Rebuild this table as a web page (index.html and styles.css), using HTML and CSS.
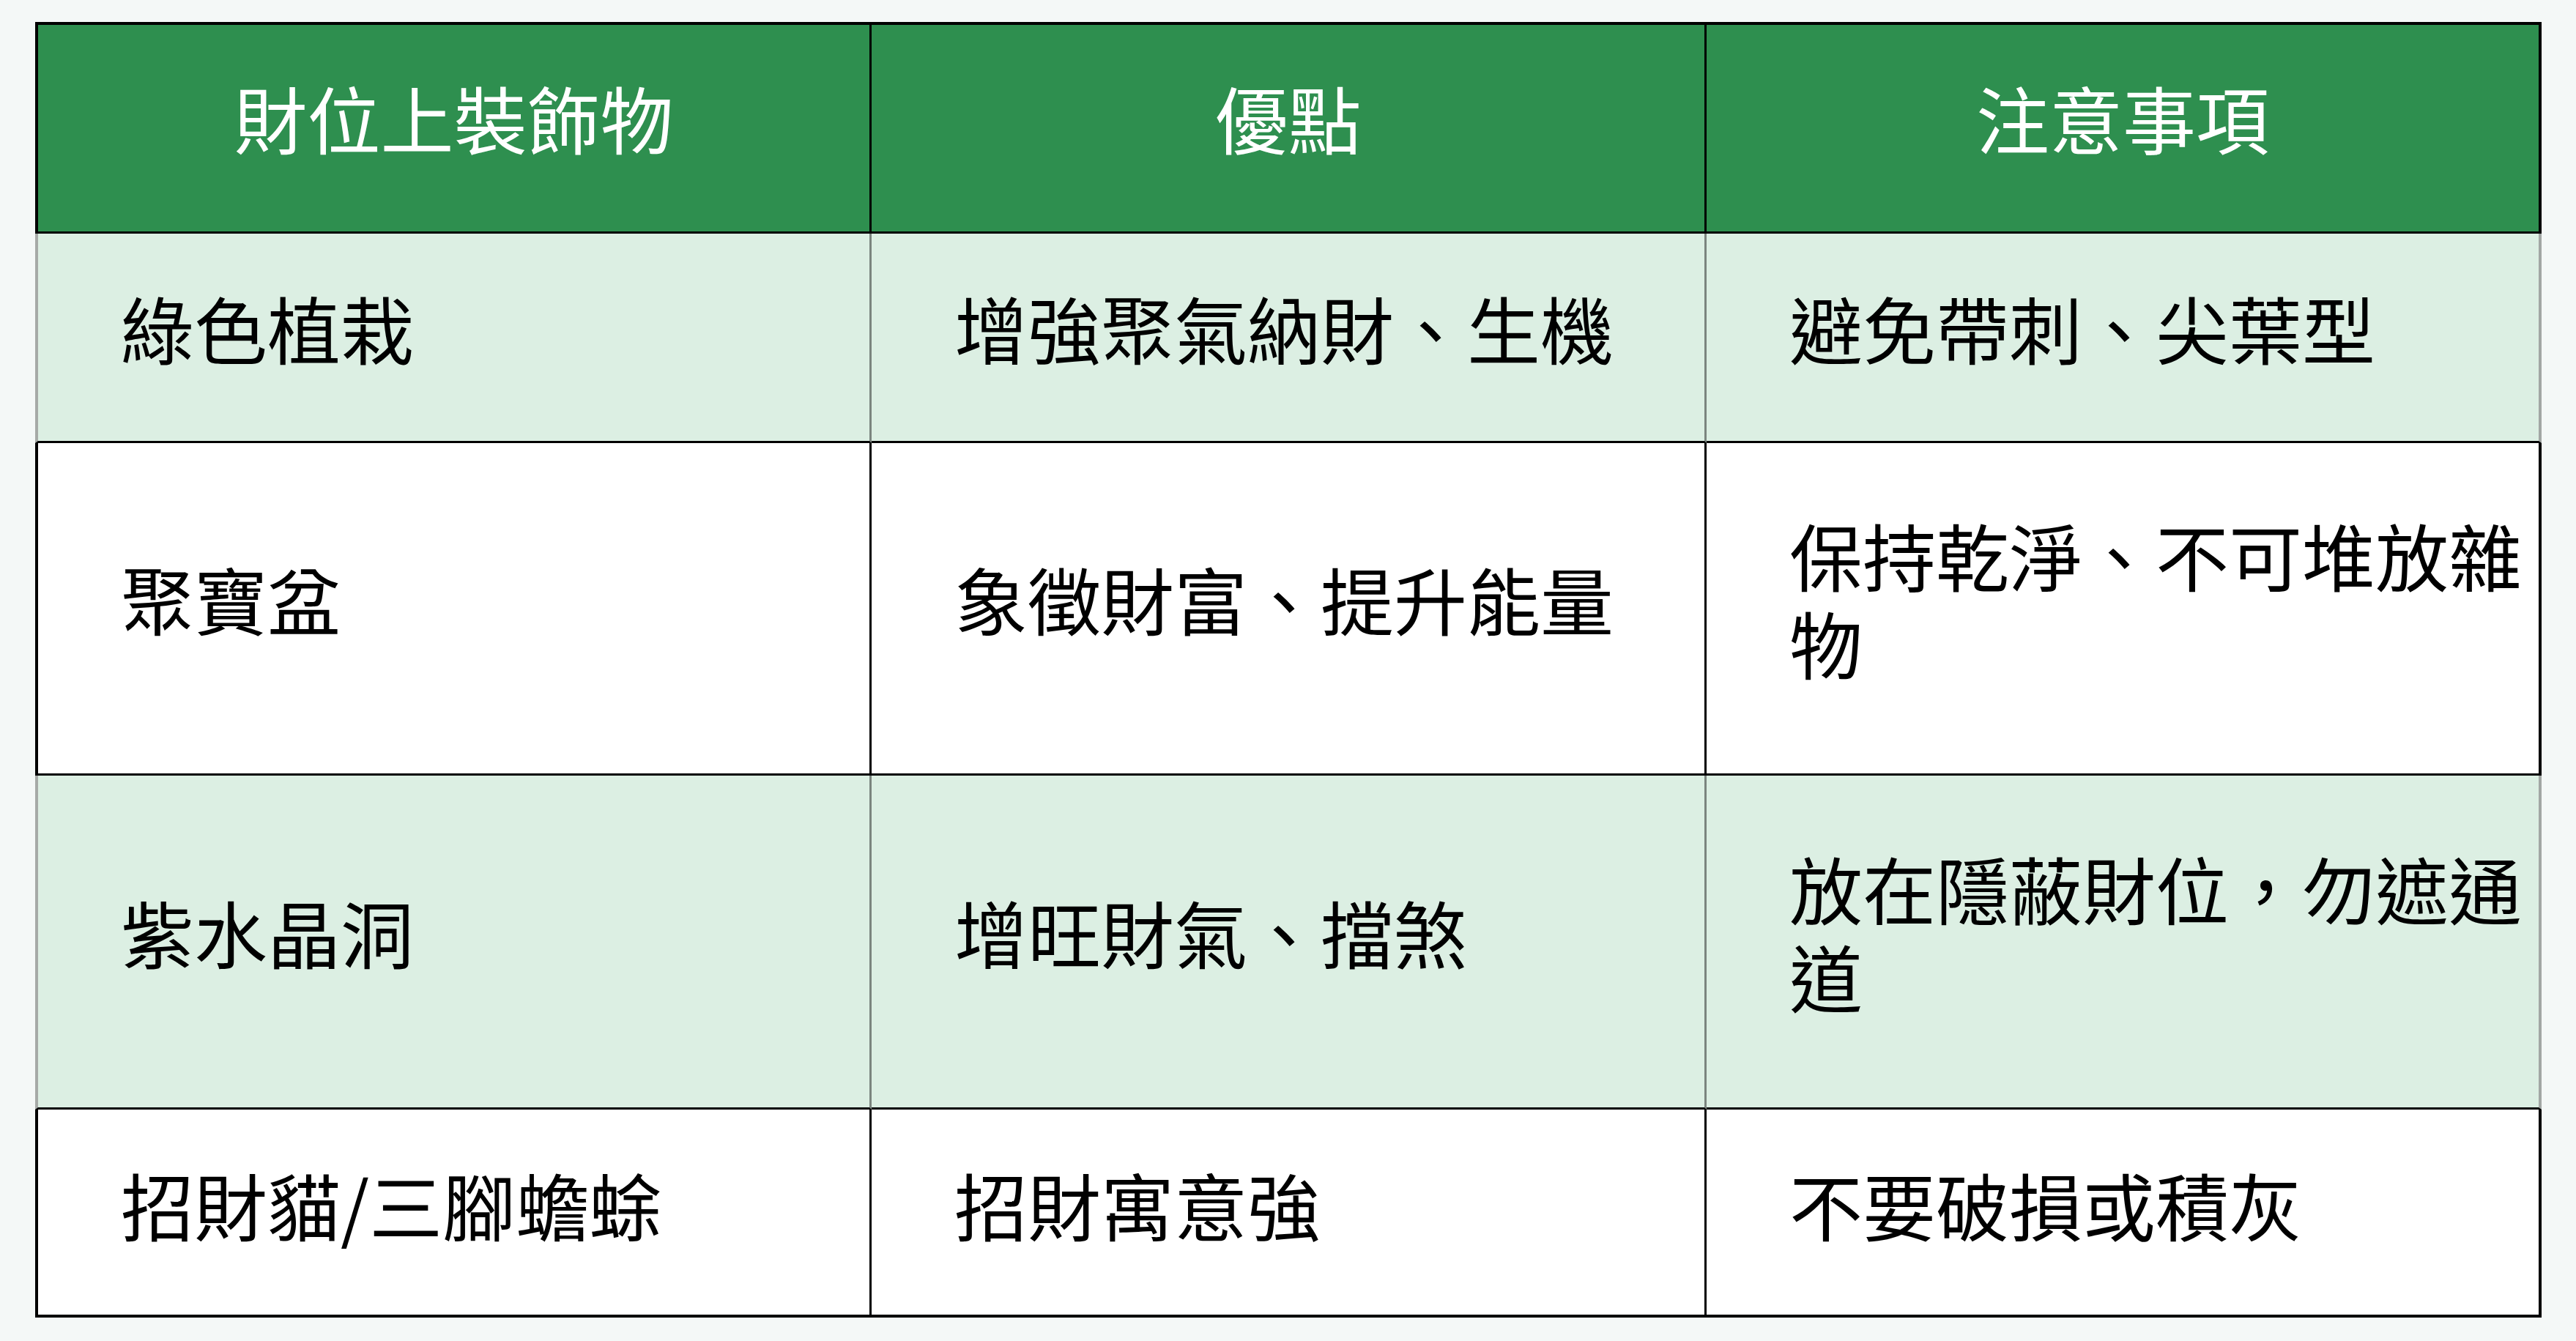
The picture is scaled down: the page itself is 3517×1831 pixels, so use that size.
FILE: index.html
```html
<!DOCTYPE html>
<html lang="zh-Hant">
<head>
<meta charset="utf-8">
<title>財位上裝飾物</title>
<link rel="stylesheet" href="styles.css">
</head>
<body>
<div class="table">
  <div class="cell head first">財位上裝飾物</div>
  <div class="cell head mid">優點</div>
  <div class="cell head last">注意事項</div>

  <div class="cell tint first">綠色植栽</div>
  <div class="cell tint mid">增強聚氣納財、生機</div>
  <div class="cell tint last">避免帶刺、尖葉型</div>

  <div class="cell plain first">聚寶盆</div>
  <div class="cell plain mid">象徵財富、提升能量</div>
  <div class="cell plain last">保持乾淨、不可堆放雜物</div>

  <div class="cell tint first">紫水晶洞</div>
  <div class="cell tint mid">增旺財氣、擋煞</div>
  <div class="cell tint last">放在隱蔽財位，勿遮通道</div>

  <div class="cell plain first end">招財貓/三腳蟾蜍</div>
  <div class="cell plain mid end">招財寓意強</div>
  <div class="cell plain last end">不要破損或積灰</div>
</div>
</body>
</html>
```

FILE: styles.css
```css
html, body {
  margin: 0;
  padding: 0;
  background: #f4f8f7;
}

body {
  padding: 30px 0 0 48px;
  font-family: "Noto Sans CJK TC", "Noto Sans CJK SC", "Noto Sans", sans-serif;
}

.table {
  box-sizing: border-box;
  width: 3422px;
  display: grid;
  grid-template-columns: 1142px 1140px 1140px;
  grid-template-rows: 285px 286px 454px 456px 280px;
  border-top: 4px solid #000;
  border-bottom: 4px solid #000;
}

.cell {
  box-sizing: border-box;
  display: flex;
  align-items: center;
  padding: 0 14px 28px 113px;
  font-size: 100px;
  line-height: 120px;
  color: #000;
  border-bottom: 3px solid #000;
}

.cell.end {
  border-bottom: none;
  padding-bottom: 22px;
}

.cell.first {
  border-left: 4px solid #000;
  border-right: 3px solid #000;
}

.cell.mid {
  border-right: 3px solid #000;
}

.cell.last {
  border-right: 4px solid #000;
}

.head {
  background: #2e8f4f;
  color: #fff;
  justify-content: center;
  padding: 0 0 30px 0;
}

.tint {
  background: #dcefe3;
}

.tint.first {
  border-left-color: #a6aaa7;
  border-right-color: #7b857f;
}

.tint.mid {
  border-right-color: #7b857f;
}

.tint.last {
  border-right-color: #a2a7a4;
}

.plain {
  background: #fff;
}
```
